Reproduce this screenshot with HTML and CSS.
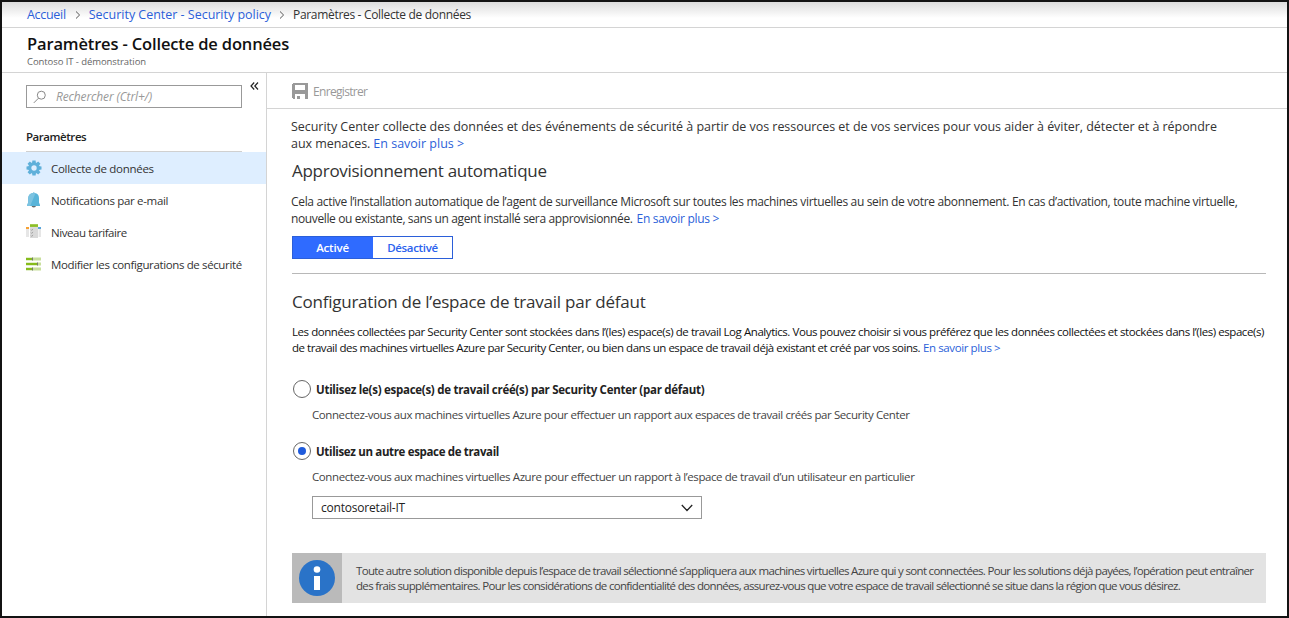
FILE: index.html
```html
<!DOCTYPE html>
<html lang="fr">
<head>
<meta charset="utf-8">
<title>Paramètres - Collecte de données</title>
<link rel="stylesheet" href="styles.css">
</head>
<body>
<div class="frame">
  <nav class="crumbs">
    <a class="t crumb-home">Accueil</a>
    <svg class="sep" width="6" height="8" viewBox="0 0 6 8"><path d="M1 .5 4.6 4 1 7.5"/></svg>
    <a class="t crumb-policy">Security Center - Security policy</a>
    <svg class="sep sep-last" width="6" height="8" viewBox="0 0 6 8"><path d="M1 .5 4.6 4 1 7.5"/></svg>
    <span class="t crumb-current">Paramètres - Collecte de données</span>
  </nav>
  <header class="header">
    <h1 class="title"><span class="t title-text">Paramètres - Collecte de données</span></h1>
    <div class="subtitle"><span class="t subtitle-text">Contoso IT - démonstration</span></div>
  </header>
  <div class="body">
    <aside class="sidebar">
      <div class="search-row">
        <div class="search">
          <svg width="14" height="14" viewBox="0 0 14 14"><circle cx="8.3" cy="5.2" r="4"/><path d="M5.5 8.2.8 12.9"/></svg>
          <span class="t search-text">Rechercher (Ctrl+/)</span>
        </div>
        <svg class="collapse" width="9" height="8" viewBox="0 0 9 8"><path d="M4.2.5 1 4l3.2 3.5M8 .5 4.8 4 8 7.5"/></svg>
      </div>
      <div class="group"><span class="t group-text">Paramètres</span></div>
      <div class="item selected">
        <svg width="16" height="16" viewBox="0 0 16 16"><g fill="#5fb0da"><path id="tooth" d="M6.400.5h3.200l.4 3.200H6z"/><use href="#tooth" transform="rotate(45 8 8)"/><use href="#tooth" transform="rotate(90 8 8)"/><use href="#tooth" transform="rotate(135 8 8)"/><use href="#tooth" transform="rotate(180 8 8)"/><use href="#tooth" transform="rotate(225 8 8)"/><use href="#tooth" transform="rotate(270 8 8)"/><use href="#tooth" transform="rotate(315 8 8)"/></g><circle cx="8" cy="8" r="4.200" fill="none" stroke="#5fb0da" stroke-width="3"/></svg>
        <span class="t item-data">Collecte de données</span>
      </div>
      <div class="item">
        <svg width="16" height="16" viewBox="0 0 16 16"><path d="M5.500 13.500h4.500a2.200 2 0 0 1-4.500 0z" fill="#6b6b6b"/><path d="M7 1Q7 .2 7.800.2T8.600 1Q12.900 1.700 13 6v4.500l1 2.600v.9H1.200v-.9l1-2.600V6Q2.600 1.700 7 1z" fill="#59b4d9"/><path d="M7 1Q2.600 1.700 2.200 6v4.500l-1 2.600v.9h3L9.500 1.200z" fill="#7cc3e1"/></svg>
        <span class="t item-notif">Notifications par e-mail</span>
      </div>
      <div class="item">
        <svg width="16" height="16" viewBox="0 0 16 16"><path d="M0 5h3v8H0zM12.500 5h2.500v8h-2.500z" fill="#e6e6e6"/><path d="M0 3h3v2H0z" fill="#f7a135"/><path d="M12 3h3v2h-3z" fill="#59a5dc"/><path d="M4 2h8v12H4z" fill="#d9d9d9"/><path d="M4 .2h8v2.700H4z" fill="#8cbf26"/><path d="m5 5.700.7.7 1.200-1.500M5 8.700l.7.7 1.200-1.500M5 11.700l.7.7 1.200-1.500" fill="none" stroke="#888" stroke-width=".7"/></svg>
        <span class="t item-tier">Niveau tarifaire</span>
      </div>
      <div class="item">
        <svg width="16" height="16" viewBox="0 0 16 16"><path d="M0 1.500h15v3H0zM0 6.500h15v3H0zM0 11.500h15v3H0z" fill="#c8df9c"/><path d="M0 2h6v2H0zM0 7h11v2H0zM0 12h6v2H0z" fill="#86bc1c"/><path d="M6 1.500h1v3H6zM11 6.500h1v3h-1zM6 11.500h1v3H6z" fill="#777"/></svg>
        <span class="t item-config">Modifier les configurations de sécurité</span>
      </div>
    </aside>
    <main class="main">
      <div class="toolbar">
        <svg width="16" height="16" viewBox="0 0 16 16" shape-rendering="crispEdges"><path fill="#999" fill-rule="evenodd" d="M1 0h14l1 1v15h-3v-5H3v5H1l-1-1V1zM3 2v5h10V2zM5 13h3v3H5z"/></svg>
        <span class="t save-text">Enregistrer</span>
      </div>
      <div class="content">
        <p class="intro"><span class="t intro-1">Security Center collecte des données et des événements de sécurité à partir de vos ressources et de vos services pour vous aider à éviter, détecter et à répondre</span><br><span class="t intro-2">aux menaces.</span><a class="t intro-link">En savoir plus &gt;</a></p>
        <h2 class="auto-title"><span class="t auto-title-text">Approvisionnement automatique</span></h2>
        <p class="auto"><span class="t auto-1">Cela active l’installation automatique de l’agent de surveillance Microsoft sur toutes les machines virtuelles au sein de votre abonnement. En cas d’activation, toute machine virtuelle,</span><br><span class="t auto-2">nouvelle ou existante, sans un agent installé sera approvisionnée.</span><a class="t auto-link">En savoir plus &gt;</a></p>
        <div class="toggle"><div class="on"><span class="t on-text">Activé</span></div><div class="off"><span class="t off-text">Désactivé</span></div></div>
        <h2 class="ws-title"><span class="t ws-title-text">Configuration de l’espace de travail par défaut</span></h2>
        <p class="ws"><span class="t ws-1">Les données collectées par Security Center sont stockées dans l’(les) espace(s) de travail Log Analytics. Vous pouvez choisir si vous préférez que les données collectées et stockées dans l’(les) espace(s)</span><br><span class="t ws-2">de travail des machines virtuelles Azure par Security Center, ou bien dans un espace de travail déjà existant et créé par vos soins.</span><a class="t ws-link">En savoir plus &gt;</a></p>
        <div class="option"><i class="radio"></i><span class="t opt-1">Utilisez le(s) espace(s) de travail créé(s) par Security Center (par défaut)</span></div>
        <p class="desc"><span class="t desc-1">Connectez-vous aux machines virtuelles Azure pour effectuer un rapport aux espaces de travail créés par Security Center</span></p>
        <div class="option second"><i class="radio checked"></i><span class="t opt-2">Utilisez un autre espace de travail</span></div>
        <p class="desc"><span class="t desc-2">Connectez-vous aux machines virtuelles Azure pour effectuer un rapport à l’espace de travail d’un utilisateur en particulier</span></p>
        <div class="select"><span class="t select-text">contosoretail-IT</span><svg width="12" height="8" viewBox="0 0 12 8"><path d="m.8 1 5.200 5.500L11.200 1"/></svg></div>
        <div class="info">
          <div class="info-icon"><svg width="36" height="36" viewBox="0 0 36 36"><circle cx="18" cy="18" r="18" fill="#2a73c8"/><circle cx="18" cy="9.500" r="3.300" fill="#fff"/><path d="M15 16h6v14h-6z" fill="#fff"/></svg></div>
          <p class="info-text"><span class="t info-1">Toute autre solution disponible depuis l’espace de travail sélectionné s’appliquera aux machines virtuelles Azure qui y sont connectées. Pour les solutions déjà payées, l’opération peut entraîner</span><br><span class="t info-2">des frais supplémentaires. Pour les considérations de confidentialité des données, assurez-vous que votre espace de travail sélectionné se situe dans la région que vous désirez.</span></p>
        </div>
      </div>
    </main>
  </div>
</div>
</body>
</html>
```
FILE: styles.css
```css
* { box-sizing: border-box; }
body { margin: 0; font-family: "Open Sans", "Noto Sans", sans-serif; font-size: 12px; color: #333; background: #fff; }
h1, h2, p { margin: 0; font-weight: 400; }
a { color: #2b5fd9; }
.t { display: inline-block; white-space: nowrap; }
.frame { width: 1289px; height: 618px; border: 2px solid #131313; overflow: hidden; }
.crumbs { display: flex; align-items: center; height: 26px; padding-left: 25px; border-bottom: 1px solid #d4d4d4; background: linear-gradient(#dcdcdc, #fff 16px); }
.sep { margin: 0 8px 0 9px; fill: none; stroke: #555; stroke-width: 1; }
.sep-last { margin-left: 8px; }
.crumbs .t { font-size: 12.5px; }
.header { height: 45px; padding: 5px 0 0 25px; border-bottom: 1px solid #d4d4d4; }
.title { height: 22px; font-size: 16.5px; line-height: 22px; font-weight: 600; color: #111; }
.subtitle { height: 13px; font-size: 9.5px; line-height: 13px; color: #666; }
.body { display: flex; height: 543px; }
.sidebar { flex: none; width: 265px; border-right: 1px solid #d4d4d4; }
.search-row { display: flex; padding: 12px 0 0 24px; }
.search { display: flex; align-items: center; width: 216px; height: 23px; padding-left: 6px; gap: 9px; border: 1px solid #999; color: #999; font-size: 12px; font-style: italic; }
.search svg { fill: none; stroke: #888; stroke-width: 1; }
.collapse { margin: -3px 0 0 8px; fill: none; stroke: #222; stroke-width: 1.2; }
.group { margin: 16px 24px 0; height: 28px; line-height: 26px; border-bottom: 1px solid #d0d0d0; font-size: 11.5px; font-weight: 600; color: #222; }
.item { display: flex; align-items: center; gap: 9px; height: 32px; padding-left: 24px; font-size: 11.5px; color: #333; }
.selected { background: #deeeff; }
.main { flex: 1; min-width: 0; }
.toolbar { display: flex; align-items: center; gap: 5px; height: 36px; padding: 1px 0 0 25px; border-bottom: 1px solid #d4d4d4; color: #999; font-size: 12px; }
.content { padding: 9px 21px 0 25px; }
.intro { height: 34px; margin-left: -1px; font-size: 12.5px; line-height: 17px; }
.auto-title, .ws-title { font-size: 17px; line-height: 24px; }
.auto-title { margin-top: 7px; }
.auto { height: 34px; margin: 10px 0 0 -1px; font-size: 12px; line-height: 17px; }
.toggle { display: flex; width: 161px; height: 23px; margin-top: 9px; border: 1px solid #2b5fd9; font-size: 11.5px; font-weight: 600; line-height: 21px; text-align: center; }
.on { width: 80px; padding-right: 1px; background: #2f6bff; color: #fff; }
.off { flex: 1; color: #2b62ee; }
.ws-title { margin-top: 14px; padding-top: 16px; border-top: 1px solid #b8b8b8; }
.ws { height: 32px; margin-top: 10px; font-size: 11.5px; line-height: 16px; color: #111; }
.option { display: flex; align-items: center; gap: 5px; height: 20px; margin: 23px 0 0 1px; font-size: 11.5px; font-weight: 700; color: #222; }
.second { margin-top: 18px; }
.radio { display: grid; place-items: center; width: 18px; height: 18px; border: 1px solid #666; border-radius: 50%; }
.checked::after { content: ""; width: 8px; height: 8px; border-radius: 50%; background: #1f5bdc; }
.desc { height: 16px; margin: 8px 0 0 20px; font-size: 11.5px; line-height: 16px; color: #444; }
.select { display: flex; align-items: center; justify-content: space-between; width: 390px; height: 23px; margin: 11px 0 0 20px; padding: 0 8px; border: 1px solid #999; font-size: 12px; color: #222; }
.select svg { fill: none; stroke: #222; stroke-width: 1.3; }
.info { display: flex; height: 50px; margin-top: 34px; background: #e3e3e3; }
.info-icon { display: grid; place-items: center; width: 50px; background: #bababa; }
.info-text { padding: 10px 0 0 14px; font-size: 11.5px; line-height: 15px; color: #444; }
.crumb-home { letter-spacing: -.3px; }
.crumb-policy { letter-spacing: -.02px; }
.crumbs .crumb-current { font-size: 12px; letter-spacing: -.32px; }
.title-text { letter-spacing: -.15px; }
.subtitle-text { letter-spacing: -.08px; }
.search-text { letter-spacing: -.15px; }
.group-text { letter-spacing: -.45px; }
.item-data { letter-spacing: -.3px; }
.item-notif { letter-spacing: -.32px; }
.item-tier { letter-spacing: -.42px; }
.item-config { letter-spacing: -.37px; }
.save-text { letter-spacing: -.68px; }
.intro-1, .intro-2 { letter-spacing: -.045px; }
.intro-2 { margin-right: 3px; }
.auto-title-text { letter-spacing: -.28px; }
.auto-1 { letter-spacing: -.333px; }
.auto-2 { margin-right: 4px; letter-spacing: -.38px; }
.auto-link { letter-spacing: -.29px; }
.on-text { letter-spacing: -.2px; }
.off-text { letter-spacing: -.33px; }
.ws-title-text { letter-spacing: -.235px; }
.ws-1 { letter-spacing: -.439px; }
.ws-2 { margin-right: 3px; letter-spacing: -.468px; }
.ws-link { letter-spacing: -.4px; }
.opt-1 { letter-spacing: -.275px; }
.opt-2 { letter-spacing: -.345px; }
.desc-1 { letter-spacing: -.416px; }
.desc-2 { letter-spacing: -.408px; }
.select-text { letter-spacing: -.2px; }
.info-1 { letter-spacing: -.68px; }
.info-2 { letter-spacing: -.673px; }
```
